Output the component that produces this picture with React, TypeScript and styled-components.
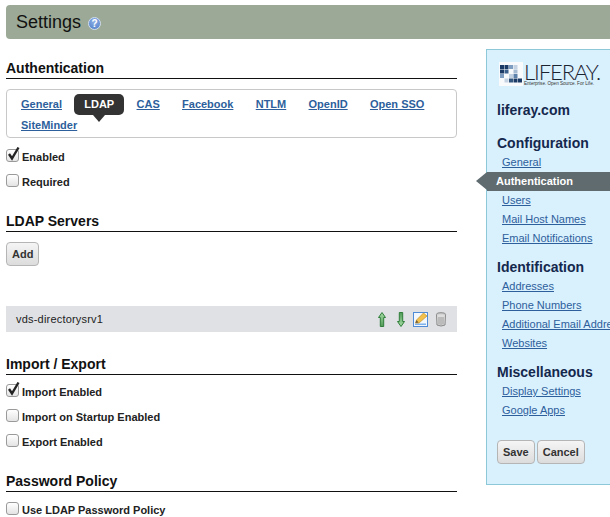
import { FC } from "react"
import styled, { createGlobalStyle } from "styled-components"

const GlobalStyle = createGlobalStyle`
  html, body {
    margin: 0;
    padding: 0;
    background: #fff;
    overflow: hidden;
    width: 610px;
    height: 517px;
    font-family: "Liberation Sans", Arial, sans-serif;
    color: #000;
  }
`

const Page = styled.div`
  width: 610px;
  height: 517px;
  overflow: hidden;
  padding: 5px 0 0 6px;
  box-sizing: border-box;
`

const TitleBar = styled.header`
  height: 34px;
  background: #9ba996;
  border-radius: 4px 0 0 4px;
  display: flex;
  align-items: center;
  gap: 7px;
  padding-left: 10px;
`

const Title = styled.h1`
  margin: 0;
  font-size: 18px;
  font-weight: 400;
  line-height: 34px;
  color: #111;
`

const HelpIcon = styled.span`
  width: 13px;
  height: 13px;
  margin-top: 3px;
  border-radius: 50%;
  background: radial-gradient(circle at 50% 30%, #8fb0e6, #4f7fc8);
  border: 1px solid #cfdcf0;
  box-sizing: border-box;
  color: #fff;
  font-size: 10px;
  font-weight: 700;
  line-height: 11px;
  text-align: center;
`

const Columns = styled.div`
  display: flex;
  gap: 29px;
  padding-top: 10px;
`

const Main = styled.main`
  width: 451px;
  flex: none;
`

const SectionTitle = styled.h2<{ $top: number }>`
  margin: ${({ $top }) => $top}px 0 0;
  font-size: 14px;
  font-weight: 700;
  line-height: 20px;
  border-bottom: 1px solid #111;
  color: #111;
`

const TabBox = styled.nav`
  margin-top: 10px;
  height: 49px;
  box-sizing: border-box;
  border: 1px solid #c8c8c8;
  border-radius: 4px;
  padding: 4px 0 0 14px;
  display: flex;
  flex-wrap: wrap;
  column-gap: 22.3px;
  align-content: flex-start;
`

const TabLink = styled.a`
  font-size: 11px;
  font-weight: 700;
  line-height: 20px;
  color: #2d5f9c;
  text-decoration: underline;
`

const ActiveTab = styled.span`
  position: relative;
  height: 21px;
  margin-right: -20px;
  left: -10px;
  padding: 0 10px;
  border-radius: 5px;
  background: #333;
  color: #fff;
  font-size: 11px;
  font-weight: 700;
  line-height: 20px;

  &::after {
    content: "";
    position: absolute;
    left: 19px;
    bottom: -7px;
    border-style: solid;
    border-width: 7px 6px 0;
    border-color: #333 transparent transparent;
  }
`

const CheckRow = styled.label<{ $top: number }>`
  display: flex;
  align-items: center;
  gap: 3px;
  height: 15px;
  margin-top: ${({ $top }) => $top}px;
  font-size: 11px;
  font-weight: 700;
  color: #222;
`

const Box = styled.span`
  position: relative;
  flex: none;
  width: 13px;
  height: 13px;
  top: -1px;
  box-sizing: border-box;
  border: 1px solid #9a9a9a;
  border-radius: 3px;
  background: linear-gradient(#fff, #e4e4e4);
`

const Tick = styled.svg`
  position: absolute;
  left: -1px;
  top: -4px;
`

const LightButton = styled.button`
  height: 24px;
  padding: 0 5px;
  box-sizing: border-box;
  border: 1px solid #b5b5b5;
  border-radius: 4px;
  background: linear-gradient(#f5f5f5, #dcdcdc);
  font-family: inherit;
  font-size: 11px;
  font-weight: 700;
  color: #333;
`

const AddRow = styled.div`
  margin-top: 10px;
  display: flex;
`

const ServerRow = styled.div`
  margin-top: 40px;
  height: 26px;
  padding: 0 10px;
  background: #dfe1e5;
  display: flex;
  align-items: center;
  justify-content: space-between;
  font-size: 11px;
  letter-spacing: 0.2px;
  color: #222;
`

const IconGroup = styled.div`
  display: flex;
  align-items: center;
  gap: 7px;
`

const Panel = styled.aside`
  flex: none;
  width: 180px;
  height: 436px;
  box-sizing: border-box;
  background: #d9f0fd;
  border: 1px solid #8cc8d8;
  padding: 12px 0 0;
`

const Logo = styled.div`
  display: flex;
  align-items: flex-start;
  gap: 1px;
  margin-left: 12px;
  height: 32px;
`

const LogoWords = styled.div`
  display: flex;
  flex-direction: column;
  margin-top: 1px;
`

const LogoName = styled.span`
  font-family: Lato, "Liberation Sans", sans-serif;
  font-weight: 300;
  font-size: 22px;
  line-height: 18px;
  letter-spacing: -1.1px;
  color: #1b2230;
`

const LogoTag = styled.span`
  font-size: 4.6px;
  line-height: 6px;
  color: #333;
  white-space: nowrap;
`

const SiteName = styled.h3`
  margin: 6px 0 0 10px;
  font-size: 14px;
  font-weight: 700;
  line-height: 20px;
  color: #14284d;
`

const NavTitle = styled.h4<{ $top: number }>`
  margin: ${({ $top }) => $top}px 0 0 10px;
  font-size: 14px;
  font-weight: 700;
  line-height: 19px;
  color: #14284d;
`

const NavLink = styled.a`
  display: block;
  margin-left: 15px;
  height: 19px;
  font-size: 11px;
  line-height: 19px;
  color: #2d5f9c;
  text-decoration: underline;
  white-space: nowrap;
`

const ActiveNav = styled.div`
  position: relative;
  height: 19px;
  padding-left: 9px;
  background: #5f6b6f;
  color: #fff;
  font-size: 11px;
  font-weight: 700;
  line-height: 19px;

  &::before {
    content: "";
    position: absolute;
    left: -11px;
    top: 0;
    border-style: solid;
    border-width: 9.5px 11px 9.5px 0;
    border-color: transparent #5f6b6f transparent transparent;
  }
`

const PanelButtons = styled.div`
  display: flex;
  gap: 2px;
  margin: 20px 0 0 10px;
`

const Check: FC<{ label: string; top: number; checked?: boolean }> = ({ label, top, checked }) => (
  <CheckRow $top={top}>
    <Box>
      {checked && (
        <Tick width="15" height="16" viewBox="0 0 15 16">
          <path d="M3 8 L6 12.5 L12.5 1.5" fill="none" stroke="#222" strokeWidth="2.4" />
        </Tick>
      )}
    </Box>
    {label}
  </CheckRow>
)

const ArrowIcon: FC<{ down?: boolean }> = ({ down }) => (
  <svg width="12" height="15" viewBox="0 0 12 15">
    <defs>
      <linearGradient id={down ? "arrowDown" : "arrowUp"} x1="0" y1="0" x2="0" y2="1">
        <stop offset="0" stopColor={down ? "#4f9a56" : "#a6dca6"} />
        <stop offset="1" stopColor={down ? "#a6dca6" : "#4f9a56"} />
      </linearGradient>
    </defs>
    <path
      d={down ? "M7 14.5 L10.5 9.5 L8.7 9.5 L8.7 0.5 L5.3 0.5 L5.3 9.5 L3.5 9.5 Z" : "M7 0.5 L10.5 5.5 L8.7 5.5 L8.7 14.5 L5.3 14.5 L5.3 5.5 L3.5 5.5 Z"}
      fill={`url(#${down ? "arrowDown" : "arrowUp"})`}
      stroke="#2f7d3a"
      strokeWidth="1"
    />
  </svg>
)

const EditIcon = () => (
  <svg width="15" height="15" viewBox="0 0 15 15">
    <rect x="0.5" y="0.5" width="14" height="14" fill="#f2f7fd" stroke="#4f8ad6" />
    <rect x="2" y="11.5" width="11" height="1.5" fill="#7fb2ea" />
    <path d="M2.5 11 L3.5 8 L10.5 1 L14 4 L6 11 Z" fill="#f3c14b" stroke="#c2942f" strokeWidth="0.7" />
    <path d="M2.5 11 L3.5 8 L5.5 10.5 Z" fill="#6b5a3a" />
  </svg>
)

const TrashIcon = () => (
  <svg width="12" height="15" viewBox="0 0 12 15">
    <ellipse cx="6" cy="2.2" rx="4.5" ry="1.5" fill="#ccc" stroke="#888" />
    <path d="M1.5 2.5 L2 13 Q6 15 10 13 L10.5 2.5" fill="#ddd" stroke="#888" />
    <path d="M4 5 V12.5 M6 5 V13 M8 5 V12.5" stroke="#999" />
  </svg>
)

const LOGO_CELLS: [number, number, string][] = [
  [0, 0, "#1b3a66"], [1, 0, "#1b3a66"], [2, 0, "#7f9dc0"], [3, 0, "#c4d2e2"],
  [0, 1, "#1b3a66"], [1, 1, "#3a5f8a"], [3, 1, "#a7bbd2"],
  [0, 2, "#7f9dc0"], [2, 2, "#c4d2e2"], [3, 2, "#5f82ab"],
  [1, 3, "#c4d2e2"], [2, 3, "#33577f"], [3, 3, "#1b3a66"], [4, 3, "#1b3a66"],
]

const LogoMark = () => (
  <svg width="24" height="24" viewBox="0 0 24 24">
    <rect width="24" height="24" fill="#f8fafc" />
    {LOGO_CELLS.map(([col, row, color]) => (
      <rect key={`${col}-${row}`} x={1 + col * 4.5} y={3 + row * 4.5} width="4" height="4" fill={color} />
    ))}
  </svg>
)

export default function App() {
  return (
    <Page>
      <GlobalStyle />
      <TitleBar>
        <Title>Settings</Title>
        <HelpIcon>?</HelpIcon>
      </TitleBar>
      <Columns>
        <Main>
          <SectionTitle $top={9}>Authentication</SectionTitle>
          <TabBox>
            <TabLink>General</TabLink>
            <ActiveTab>LDAP</ActiveTab>
            <TabLink>CAS</TabLink>
            <TabLink>Facebook</TabLink>
            <TabLink>NTLM</TabLink>
            <TabLink>OpenID</TabLink>
            <TabLink>Open SSO</TabLink>
            <TabLink>SiteMinder</TabLink>
          </TabBox>
          <Check label="Enabled" top={11} checked />
          <Check label="Required" top={10} />
          <SectionTitle $top={22}>LDAP Servers</SectionTitle>
          <AddRow>
            <LightButton>Add</LightButton>
          </AddRow>
          <ServerRow>
            vds-directorysrv1
            <IconGroup>
              <ArrowIcon />
              <ArrowIcon down />
              <EditIcon />
              <TrashIcon />
            </IconGroup>
          </ServerRow>
          <SectionTitle $top={22}>Import / Export</SectionTitle>
          <Check label="Import Enabled" top={9} checked />
          <Check label="Import on Startup Enabled" top={10} />
          <Check label="Export Enabled" top={10} />
          <SectionTitle $top={22}>Password Policy</SectionTitle>
          <Check label="Use LDAP Password Policy" top={10} />
        </Main>
        <Panel>
          <Logo>
            <LogoMark />
            <LogoWords>
              <LogoName>LIFERAY.</LogoName>
              <LogoTag>Enterprise. Open Source. For Life.</LogoTag>
            </LogoWords>
          </Logo>
          <SiteName>liferay.com</SiteName>
          <NavTitle $top={14}>Configuration</NavTitle>
          <NavLink>General</NavLink>
          <ActiveNav>Authentication</ActiveNav>
          <NavLink>Users</NavLink>
          <NavLink>Mail Host Names</NavLink>
          <NavLink>Email Notifications</NavLink>
          <NavTitle $top={10}>Identification</NavTitle>
          <NavLink>Addresses</NavLink>
          <NavLink>Phone Numbers</NavLink>
          <NavLink>Additional Email Addresses</NavLink>
          <NavLink>Websites</NavLink>
          <NavTitle $top={10}>Miscellaneous</NavTitle>
          <NavLink>Display Settings</NavLink>
          <NavLink>Google Apps</NavLink>
          <PanelButtons>
            <LightButton>Save</LightButton>
            <LightButton>Cancel</LightButton>
          </PanelButtons>
        </Panel>
      </Columns>
    </Page>
  )
}
